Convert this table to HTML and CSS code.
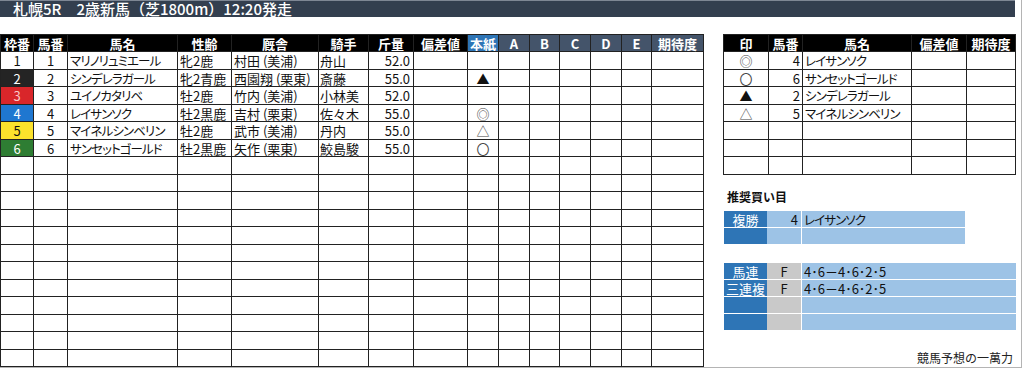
FILE: index.html
```html
<!DOCTYPE html>
<html lang="ja">
<head>
<meta charset="utf-8">
<title>札幌5R 2歳新馬</title>
<link rel="stylesheet" href="styles.css">
</head>
<body>
<div class="sheet">
  <div class="titlebar">札幌5R　2歳新馬（芝1800m）12:20発走</div>
  <div class="content">
    <div class="race">
      <div class="h">枠番</div><div class="h">馬番</div><div class="h">馬名</div><div class="h">性齢</div><div class="h">厩舎</div><div class="h">騎手</div><div class="h">斤量</div><div class="h">偏差値</div><div class="h hb">本紙</div><div class="h hs">A</div><div class="h hs">B</div><div class="h hs">C</div><div class="h hs">D</div><div class="h hs">E</div><div class="h hs">期待度</div>

      <div class="ctr f1">1</div><div class="ctr">1</div><div class="nm">マリノリュミエール</div><div class="lt">牝2鹿</div><div class="lt">村田 (美浦)</div><div class="lj">舟山</div><div class="rt">52.0</div><div></div><div class="ctr mk"></div><div></div><div></div><div></div><div></div><div></div><div></div>
      <div class="ctr f2">2</div><div class="ctr">2</div><div class="nm">シンデレラガール</div><div class="lt">牝2青鹿</div><div class="lt">西園翔 (栗東)</div><div class="lj">斎藤</div><div class="rt">55.0</div><div></div><div class="ctr mk">▲</div><div></div><div></div><div></div><div></div><div></div><div></div>
      <div class="ctr f3">3</div><div class="ctr">3</div><div class="nm">ユイノカタリベ</div><div class="lt">牡2鹿</div><div class="lt">竹内 (美浦)</div><div class="lj">小林美</div><div class="rt">52.0</div><div></div><div class="ctr mk"></div><div></div><div></div><div></div><div></div><div></div><div></div>
      <div class="ctr f4">4</div><div class="ctr">4</div><div class="nm">レイサンソク</div><div class="lt">牡2黒鹿</div><div class="lt">吉村 (栗東)</div><div class="lj">佐々木</div><div class="rt">55.0</div><div></div><div class="ctr mk mg">◎</div><div></div><div></div><div></div><div></div><div></div><div></div>
      <div class="ctr f5">5</div><div class="ctr">5</div><div class="nm">マイネルシンベリン</div><div class="lt">牡2鹿</div><div class="lt">武市 (美浦)</div><div class="lj">丹内</div><div class="rt">55.0</div><div></div><div class="ctr mk mg">△</div><div></div><div></div><div></div><div></div><div></div><div></div>
      <div class="ctr f6">6</div><div class="ctr">6</div><div class="nm">サンセットゴールド</div><div class="lt">牡2黒鹿</div><div class="lt">矢作 (栗東)</div><div class="lj">鮫島駿</div><div class="rt">55.0</div><div></div><div class="ctr mk mg">〇</div><div></div><div></div><div></div><div></div><div></div><div></div>

      <div></div><div></div><div></div><div></div><div></div><div></div><div></div><div></div><div></div><div></div><div></div><div></div><div></div><div></div><div></div>
      <div></div><div></div><div></div><div></div><div></div><div></div><div></div><div></div><div></div><div></div><div></div><div></div><div></div><div></div><div></div>
      <div></div><div></div><div></div><div></div><div></div><div></div><div></div><div></div><div></div><div></div><div></div><div></div><div></div><div></div><div></div>
      <div></div><div></div><div></div><div></div><div></div><div></div><div></div><div></div><div></div><div></div><div></div><div></div><div></div><div></div><div></div>
      <div></div><div></div><div></div><div></div><div></div><div></div><div></div><div></div><div></div><div></div><div></div><div></div><div></div><div></div><div></div>
      <div></div><div></div><div></div><div></div><div></div><div></div><div></div><div></div><div></div><div></div><div></div><div></div><div></div><div></div><div></div>
      <div></div><div></div><div></div><div></div><div></div><div></div><div></div><div></div><div></div><div></div><div></div><div></div><div></div><div></div><div></div>
      <div></div><div></div><div></div><div></div><div></div><div></div><div></div><div></div><div></div><div></div><div></div><div></div><div></div><div></div><div></div>
      <div></div><div></div><div></div><div></div><div></div><div></div><div></div><div></div><div></div><div></div><div></div><div></div><div></div><div></div><div></div>
      <div></div><div></div><div></div><div></div><div></div><div></div><div></div><div></div><div></div><div></div><div></div><div></div><div></div><div></div><div></div>
      <div></div><div></div><div></div><div></div><div></div><div></div><div></div><div></div><div></div><div></div><div></div><div></div><div></div><div></div><div></div>
      <div></div><div></div><div></div><div></div><div></div><div></div><div></div><div></div><div></div><div></div><div></div><div></div><div></div><div></div><div></div>
    </div>

    <div class="panel">
      <div class="marks">
        <div class="h">印</div><div class="h">馬番</div><div class="h">馬名</div><div class="h">偏差値</div><div class="h">期待度</div>
        <div class="ctr mk mg">◎</div><div class="rt">4</div><div class="nm">レイサンソク</div><div></div><div></div>
        <div class="ctr mk mg">〇</div><div class="rt">6</div><div class="nm">サンセットゴールド</div><div></div><div></div>
        <div class="ctr mk">▲</div><div class="rt">2</div><div class="nm">シンデレラガール</div><div></div><div></div>
        <div class="ctr mk mg">△</div><div class="rt">5</div><div class="nm">マイネルシンベリン</div><div></div><div></div>
        <div></div><div></div><div></div><div></div><div></div>
        <div></div><div></div><div></div><div></div><div></div>
        <div></div><div></div><div></div><div></div><div></div>
      </div>

      <div class="rec-title">推奨買い目</div>
      <div class="bets bets-single">
        <div class="lab">複勝</div><div class="num">4</div><div class="txt nm">レイサンソク</div>
        <div class="lab"></div><div class="num"></div><div class="txt"></div>
      </div>
      <div class="bets bets-combo">
        <div class="lab">馬連</div><div class="typ">F</div><div class="txt">4･6－4･6･2･5</div>
        <div class="lab">三連複</div><div class="typ">F</div><div class="txt">4･6－4･6･2･5</div>
        <div class="lab"></div><div class="typ"></div><div class="txt"></div>
        <div class="lab"></div><div class="typ"></div><div class="txt"></div>
      </div>
      <div class="credit">競馬予想の一萬力</div>
    </div>
  </div>
</div>
</body>
</html>
```

FILE: styles.css
```css
* { box-sizing: border-box; }

html, body {
  margin: 0;
  padding: 0;
  background: #fff;
}

body {
  font-family: "Noto Sans CJK JP", "Noto Sans", sans-serif;
  font-size: 13px;
  color: #111;
}

.sheet {
  width: 1022px;
  height: 368px;
  border-right: 1px solid #b4b4b4;
  border-bottom: 1px solid #b4b4b4;
  display: flex;
  flex-direction: column;
}

.titlebar {
  width: 1015px;
  height: 17px;
  background: #333f4f;
  border-top: 1px solid #7e8794;
  color: #fff;
  font-size: 15px;
  font-weight: 500;
  line-height: 15px;
  padding-left: 13px;
  white-space: nowrap;
}

.content {
  margin-top: 17px;
  display: flex;
  gap: 19px;
  align-items: stretch;
}

/* main race table */
.race,
.marks {
  display: grid;
  gap: 1px;
  background: #222;
  border: 1px solid #222;
}

.race {
  grid-template-columns: 32px 33px 109px 53px 86px 49px 44px 53px 30px 30px 29px 30px 30px 29px 51px;
  grid-template-rows: 16px repeat(9, 17px 16px);
}

.marks {
  grid-template-columns: 44px 33px 108px 54px 48px;
  grid-template-rows: 16px repeat(3, 17px 16px) 17px;
}

.race > div,
.marks > div {
  background: #fff;
  display: flex;
  align-items: center;
  white-space: nowrap;
  line-height: 15px;
}

.race > .h,
.marks > .h {
  background: #000;
  color: #fff;
  font-weight: 700;
  justify-content: center;
  font-size: 13px;
}

.race > .hb { background: #2e75b6; }
.race > .hs { background: #44546a; }

.ctr { justify-content: center; }
.lt { padding-left: 2px; }
.lj { padding-left: 1px; }
.rt { justify-content: flex-end; padding-right: 3px; }
.marks > .rt { padding-right: 2px; }

.nm {
  padding-left: 2px;
  font-feature-settings: "palt";
  letter-spacing: -0.9px;
  font-size: 12.5px;
}

.mk { font-size: 13px; }
.mg { color: #444; }

.race > .f2 { background: #242424; color: #fff; }
.race > .f3 { background: #d9262a; color: #f9c9c9; }
.race > .f4 { background: #1f77d0; color: #fff; }
.race > .f5 { background: #fce22c; color: #111; }
.race > .f6 { background: #2e7d33; color: #fff; }

/* right panel */
.panel {
  width: 293px;
  display: flex;
  flex-direction: column;
}

.rec-title {
  margin-top: 13px;
  padding-left: 4px;
  font-size: 12px;
  font-weight: 700;
  line-height: 18px;
  color: #111;
}

.bets {
  display: grid;
  row-gap: 1px;
  background: #fff;
  margin-left: 1px;
}

.bets-single {
  margin-top: 5px;
  width: 241px;
  grid-template-columns: 43px 34px 164px;
  grid-template-rows: 16px 16px;
}

.bets-combo {
  margin-top: 19px;
  width: 292px;
  grid-template-columns: 43px 34px 215px;
  grid-template-rows: repeat(4, 16px);
}

.bets > div {
  display: flex;
  align-items: center;
  white-space: nowrap;
  line-height: 15px;
}

.bets .lab {
  background: #2e75b6;
  color: #fff;
  justify-content: center;
  font-size: 13px;
}

.bets .num {
  background: #9dc3e6;
  justify-content: flex-end;
  padding-right: 3px;
}

.bets .typ {
  background: #c9c9c9;
  justify-content: center;
}

.bets .txt {
  background: #9dc3e6;
  border-left: 1px solid #fff;
  padding-left: 2px;
}

.credit {
  margin-top: auto;
  text-align: right;
  padding-right: 3px;
  font-size: 12px;
  line-height: 18px;
  color: #222;
}
```
